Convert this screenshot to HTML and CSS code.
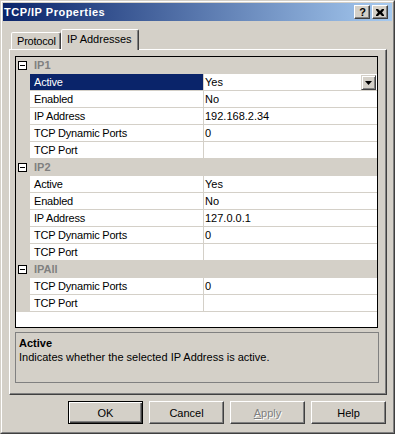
FILE: index.html
```html
<!DOCTYPE html>
<html>
<head>
<meta charset="utf-8">
<title>TCP/IP Properties</title>
<link rel="stylesheet" href="styles.css">
</head>
<body>
<div class="window">
  <div class="frame">
    <div class="titlebar">
      <span class="title">TCP/IP Properties</span>
      <div class="caption-btns">
        <div class="cap cap-help">?</div>
        <div class="cap">
          <svg width="8" height="7" viewBox="0 0 8 7"><path d="M0 0h2l2 2 2-2h2v1l-2 2.5 2 2.5v1h-2l-2-2-2 2h-2v-1l2-2.5-2-2.5z" fill="#000"/></svg>
        </div>
      </div>
    </div>
    <div class="content">
      <div class="tabs">
        <div class="tab">Protocol</div>
        <div class="tab active">IP Addresses</div>
      </div>
      <div class="panel">
        <div class="grid">
          <div class="cat"><span class="toggle"></span><span class="cat-name">IP1</span></div>
          <div class="row"><div class="margin"></div><div class="name selected">Active</div><div class="value">Yes<span class="dd"><svg width="7" height="4" viewBox="0 0 7 4"><path d="M0 0h7l-3.5 4z" fill="#000"/></svg></span></div></div>
          <div class="row"><div class="margin"></div><div class="name">Enabled</div><div class="value">No</div></div>
          <div class="row"><div class="margin"></div><div class="name">IP Address</div><div class="value">192.168.2.34</div></div>
          <div class="row"><div class="margin"></div><div class="name">TCP Dynamic Ports</div><div class="value">0</div></div>
          <div class="row"><div class="margin"></div><div class="name">TCP Port</div><div class="value"></div></div>
          <div class="cat"><span class="toggle"></span><span class="cat-name">IP2</span></div>
          <div class="row"><div class="margin"></div><div class="name">Active</div><div class="value">Yes</div></div>
          <div class="row"><div class="margin"></div><div class="name">Enabled</div><div class="value">No</div></div>
          <div class="row"><div class="margin"></div><div class="name">IP Address</div><div class="value">127.0.0.1</div></div>
          <div class="row"><div class="margin"></div><div class="name">TCP Dynamic Ports</div><div class="value">0</div></div>
          <div class="row"><div class="margin"></div><div class="name">TCP Port</div><div class="value"></div></div>
          <div class="cat"><span class="toggle"></span><span class="cat-name">IPAll</span></div>
          <div class="row"><div class="margin"></div><div class="name">TCP Dynamic Ports</div><div class="value">0</div></div>
          <div class="row"><div class="margin"></div><div class="name">TCP Port</div><div class="value"></div></div>
        </div>
        <div class="desc">
          <div class="desc-title">Active</div>
          <div class="desc-text">Indicates whether the selected IP Address is active.</div>
        </div>
      </div>
      <div class="buttons">
        <div class="btn default">OK</div>
        <div class="btn">Cancel</div>
        <div class="btn disabled"><span class="ul">A</span>pply</div>
        <div class="btn">Help</div>
      </div>
    </div>
  </div>
</div>
</body>
</html>
```

FILE: styles.css
```css
* { box-sizing: border-box; }
html, body {
  margin: 0;
  padding: 0;
  background: #d4d0c8;
}
body {
  font-family: "Liberation Sans", Arial, sans-serif;
  font-size: 11px;
  color: #000;
}
.window {
  width: 395px;
  height: 434px;
  border: 1px solid;
  border-color: #d4d0c8 #404040 #404040 #d4d0c8;
  background: #d4d0c8;
}
.frame {
  height: 100%;
  border: 1px solid;
  border-color: #fff #808080 #808080 #fff;
  padding: 1px;
  display: flex;
  flex-direction: column;
}
.titlebar {
  height: 18px;
  flex: none;
  display: flex;
  align-items: center;
  padding: 0 4px 0 1px;
  background: linear-gradient(to right, #0a246a, #a6caf0);
}
.title {
  color: #fff;
  font-weight: bold;
  font-size: 11px;
  letter-spacing: 0.5px;
  flex: 1;
  line-height: 18px;
}
.caption-btns {
  display: flex;
  gap: 2px;
}
.cap {
  width: 16px;
  height: 14px;
  background: #d4d0c8;
  border: 1px solid;
  border-color: #fff #404040 #404040 #fff;
  box-shadow: inset -1px -1px 0 #808080;
  display: flex;
  align-items: center;
  justify-content: center;
}
.cap-help {
  font-weight: bold;
  font-size: 11px;
  line-height: 12px;
  padding-left: 1px;
}
.content {
  flex: 1;
  display: flex;
  flex-direction: column;
  padding: 8px 5px 0 6px;
}
.tabs {
  display: flex;
  align-items: flex-end;
  height: 20px;
  padding-left: 2px;
  position: relative;
  z-index: 1;
}
.tab {
  height: 17px;
  padding: 0 0 0 5px;
  line-height: 16px;
  white-space: nowrap;
  letter-spacing: -0.2px;
  border: 1px solid;
  border-bottom: none;
  border-color: #fff #404040 transparent #fff;
  box-shadow: inset -1px 0 0 #808080;
  border-radius: 2px 2px 0 0;
  background: #d4d0c8;
  width: 50px;
}
.tab.active {
  height: 21px;
  width: 78px;
  margin-bottom: -1px;
  line-height: 18px;
  letter-spacing: 0;
}
.panel {
  width: 378px;
  height: 346px;
  border: 1px solid;
  border-color: #fff #404040 #404040 #fff;
  box-shadow: inset -1px -1px 0 #808080;
  padding: 6px 0 0 5px;
}
.grid {
  width: 363px;
  height: 272px;
  border: 1px solid #000;
  background: #fff;
}
.cat {
  height: 17px;
  background: #d4d0c8;
  display: flex;
  align-items: flex-start;
}
.toggle {
  width: 9px;
  height: 9px;
  margin: 4px 0 0 2px;
  border: 1px solid #000;
  background: #fff;
  position: relative;
}
.toggle::after {
  content: "";
  position: absolute;
  left: 1px;
  top: 3px;
  width: 5px;
  height: 1px;
  background: #000;
}
.cat-name {
  margin-left: 7px;
  font-weight: bold;
  color: #808080;
  line-height: 16px;
}
.row {
  height: 17px;
  display: flex;
  border-bottom: 1px solid #d4d0c8;
}
.margin {
  width: 14px;
  background: #d4d0c8;
}
.name {
  width: 174px;
  border-right: 1px solid #d4d0c8;
  padding-left: 4px;
  line-height: 16px;
  white-space: nowrap;
  letter-spacing: -0.2px;
}
.name.selected {
  background: #0a246a;
  color: #fff;
}
.value {
  flex: 1;
  padding-left: 1px;
  line-height: 16px;
  display: flex;
}
.dd {
  margin: 1px 1px 0 auto;
  width: 15px;
  height: 15px;
  background: #d4d0c8;
  border: 1px solid;
  border-color: #d4d0c8 #404040 #404040 #d4d0c8;
  box-shadow: inset 1px 1px 0 #fff, inset -1px -1px 0 #808080;
  display: flex;
  align-items: center;
  justify-content: center;
}
.desc {
  width: 364px;
  height: 51px;
  margin-top: 4px;
  border: 1px solid #808080;
  padding: 3px 0 0 3px;
  line-height: 14px;
}
.desc-title {
  font-weight: bold;
}
.buttons {
  display: flex;
  justify-content: flex-end;
  gap: 6px;
  margin: 6px 1px 0 0;
}
.btn {
  width: 75px;
  height: 23px;
  border: 1px solid;
  border-color: #fff #404040 #404040 #fff;
  box-shadow: inset -1px -1px 0 #808080;
  display: flex;
  align-items: center;
  justify-content: center;
  background: #d4d0c8;
}
.btn.default {
  border-color: #000;
  box-shadow: inset 1px 1px 0 #fff, inset -1px -1px 0 #404040, inset -2px -2px 0 #808080;
}
.btn.disabled {
  color: #808080;
  text-shadow: 1px 1px 0 #fff;
}
.ul {
  text-decoration: underline;
}
```
